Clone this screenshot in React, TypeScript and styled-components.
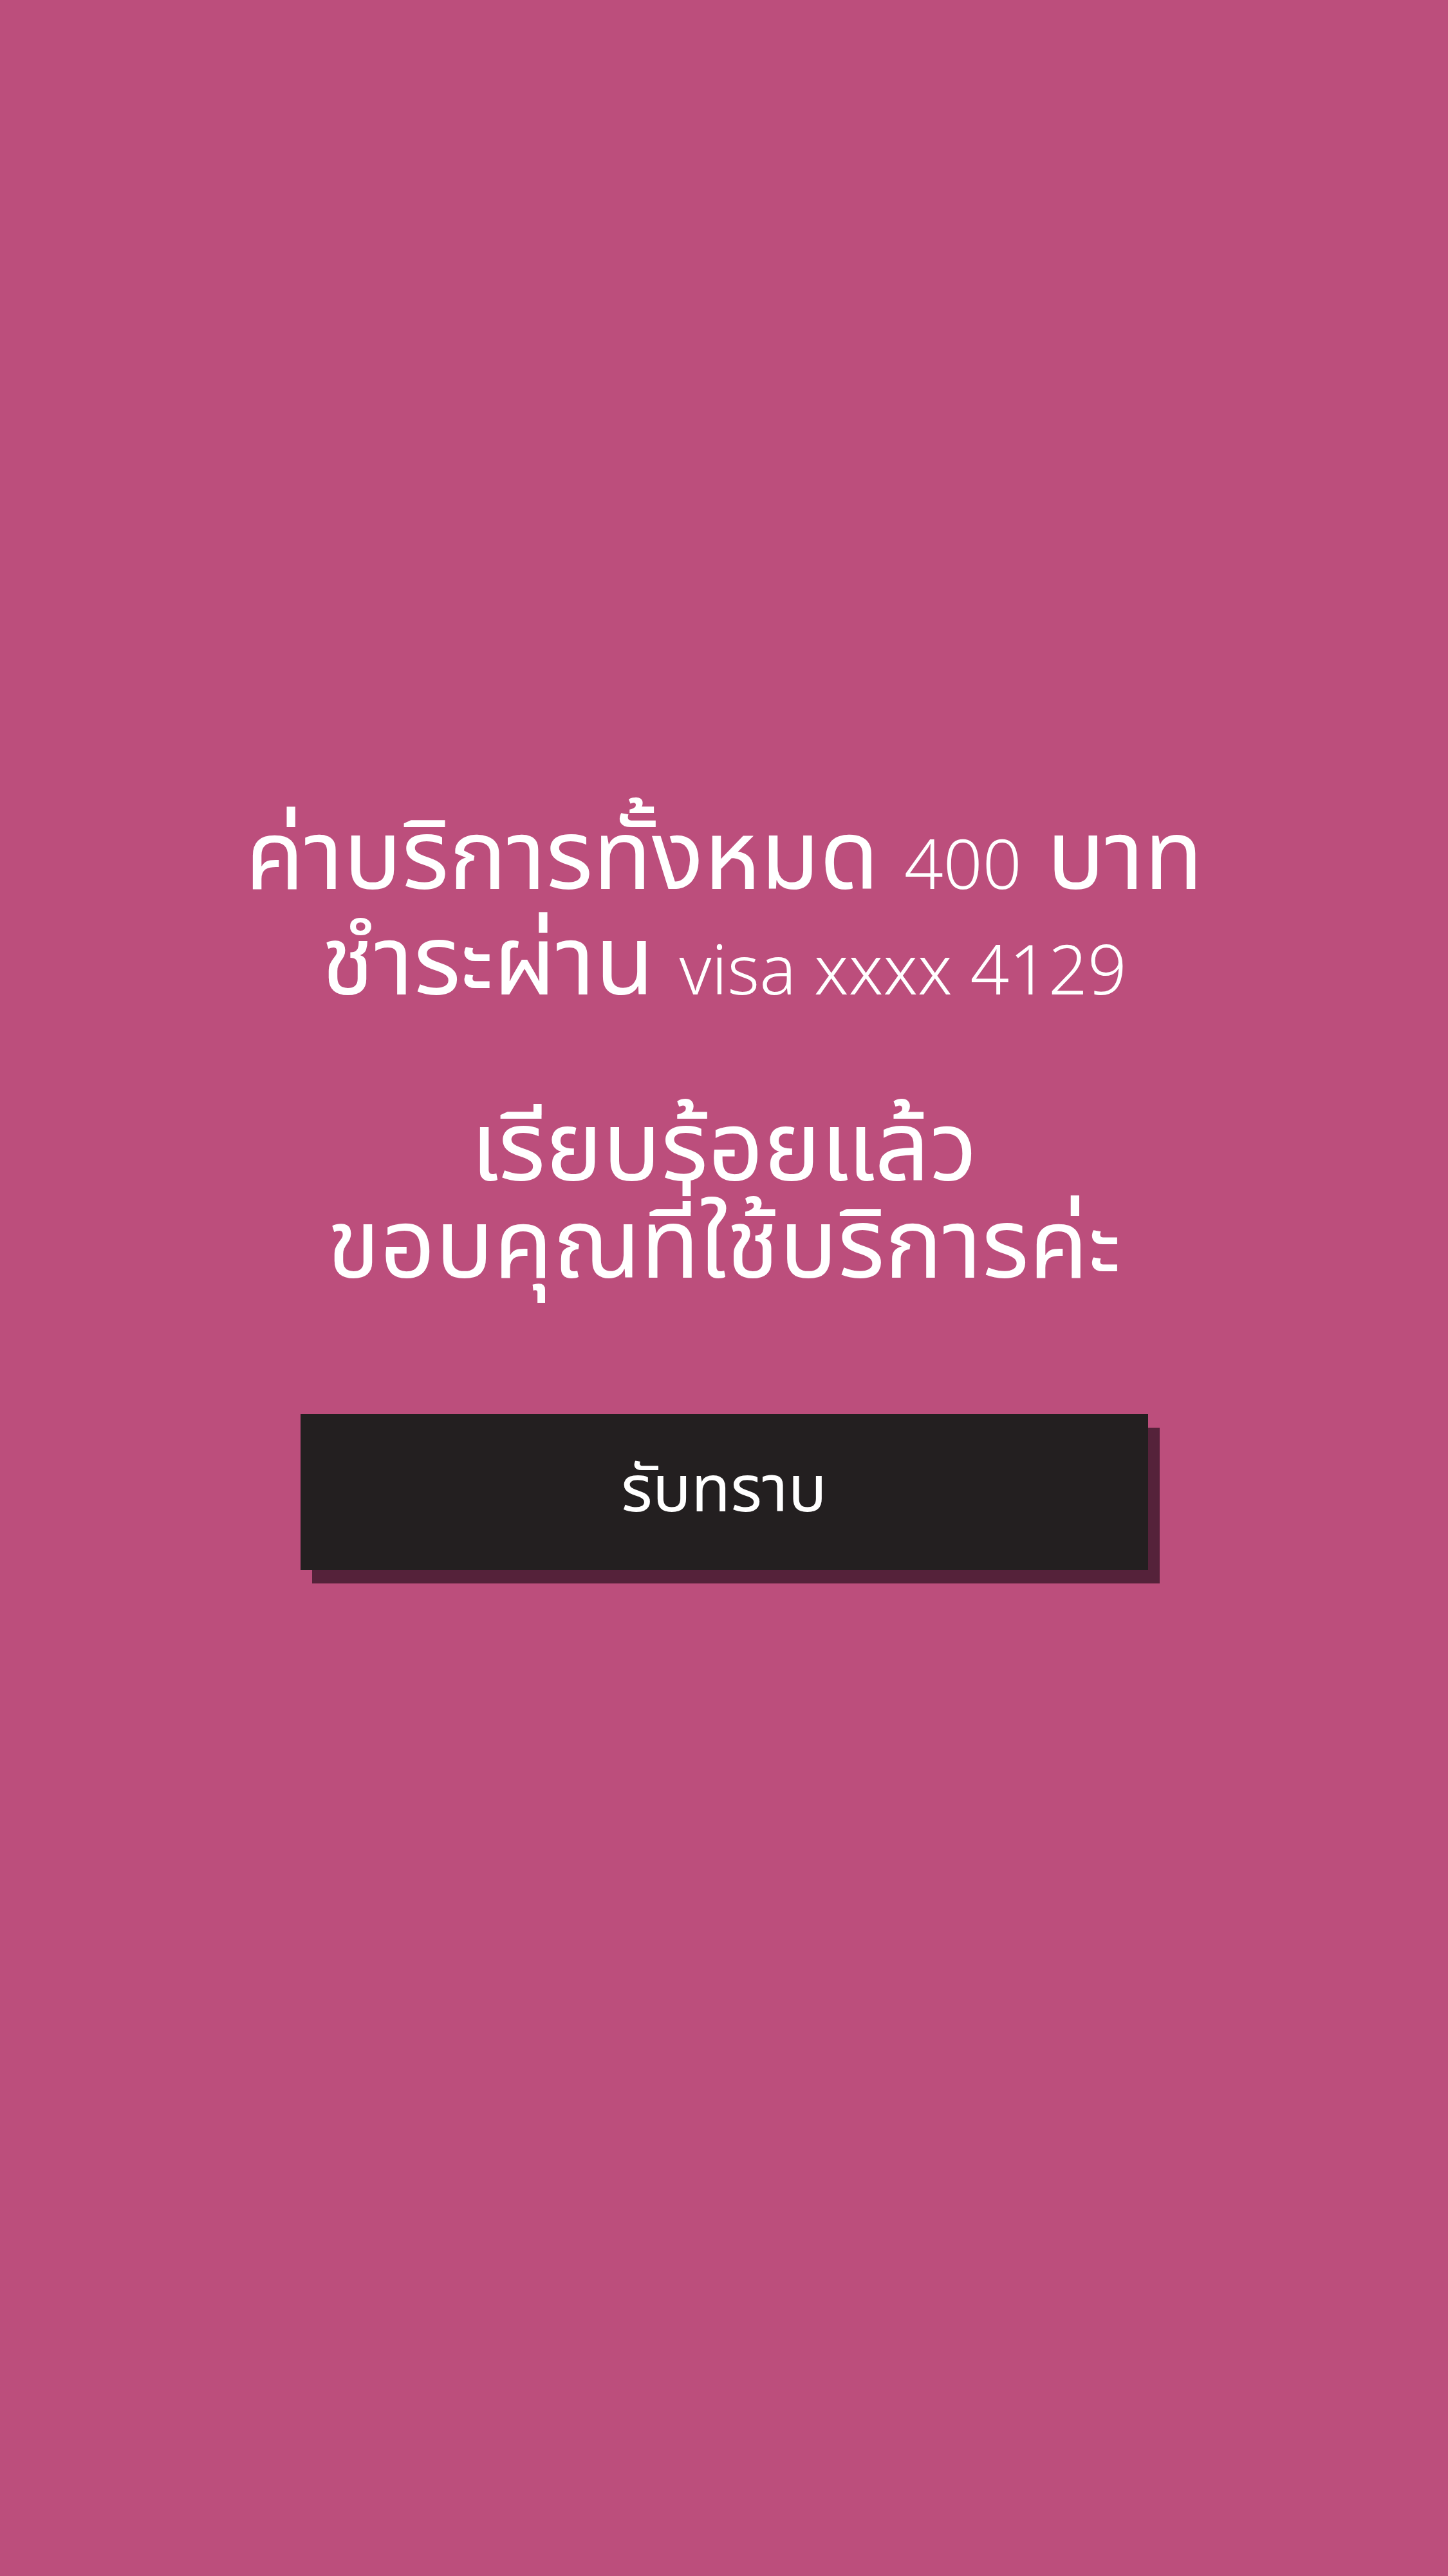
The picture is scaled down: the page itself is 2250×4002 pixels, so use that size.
import styled, { createGlobalStyle } from 'styled-components';

const GlobalStyle = createGlobalStyle`
  html, body {
    margin: 0;
    padding: 0;
    background: #bc4e7c;
  }
  body {
    font-family: "Noto Sans Thai", "Noto Sans", "DejaVu Sans", sans-serif;
  }
`;

const Page = styled.div`
  width: 2250px;
  height: 4002px;
  background: #bc4e7c;
  display: flex;
  flex-direction: column;
  align-items: center;
  padding-top: 1260px;
  box-sizing: border-box;
  color: #ffffff;
`;

const Message = styled.p`
  margin: 0;
  font-size: 150px;
  line-height: 151px;
  text-align: center;
  font-weight: 400;
  white-space: nowrap;
`;

const Gap = styled.div`
  height: 125px;
`;

const Latin = styled.span`
  font-size: 0.71em;
  font-weight: 300;
`;

const ButtonWrap = styled.div`
  margin-top: 182px;
  position: relative;
  width: 1317px;
  height: 242px;
`;

const ButtonShadow = styled.div`
  position: absolute;
  left: 18px;
  top: 21px;
  width: 100%;
  height: 100%;
  background: #55223a;
`;

const OkButton = styled.button`
  position: relative;
  width: 100%;
  height: 100%;
  border: none;
  background: #231f20;
  color: #ffffff;
  font-family: inherit;
  font-size: 100px;
  line-height: 1;
  cursor: pointer;
`;

const App = (): JSX.Element => {
  return (
    <>
      <GlobalStyle />
      <Page>
        <Message>
          ค่าบริการทั้งหมด <Latin>400</Latin> บาท
          <br />
          ชำระผ่าน <Latin>visa xxxx 4129</Latin>
        </Message>
        <Gap />
        <Message>
          เรียบร้อยแล้ว
          <br />
          ขอบคุณที่ใช้บริการค่ะ
        </Message>
        <ButtonWrap>
          <ButtonShadow />
          <OkButton>รับทราบ</OkButton>
        </ButtonWrap>
      </Page>
    </>
  );
};

export default App;
